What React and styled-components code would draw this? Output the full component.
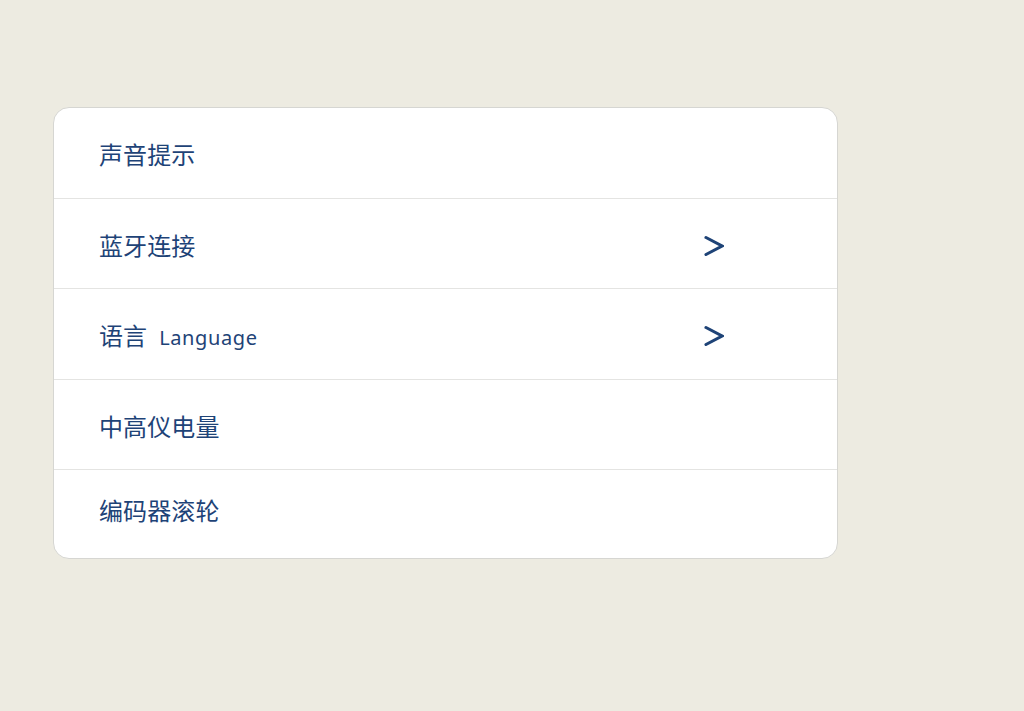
import React from "react";
import styled, { createGlobalStyle } from "styled-components";

const GlobalStyle = createGlobalStyle`
  html, body {
    margin: 0;
    padding: 0;
    background: #edebe1;
  }
  body {
    font-family: "Noto Sans CJK SC", "Noto Sans", sans-serif;
  }
`;

const Page = styled.div`
  min-height: 711px;
  padding: 107px 0 0 53px;
  box-sizing: border-box;
`;

const Card = styled.div`
  width: 785px;
  box-sizing: border-box;
  background: #ffffff;
  border: 1px solid #d6d6d2;
  border-radius: 16px;
  overflow: hidden;
`;

const Row = styled.div`
  display: flex;
  align-items: center;
  justify-content: space-between;
  height: ${(p) => (p.last ? "88px" : "90.5px")};
  padding: ${(p) => (p.last ? "0 0 10px 45px" : "2px 0 0 45px")};
  box-sizing: border-box;
  border-bottom: ${(p) => (p.last ? "none" : "1px solid #e4e4e2")};
`;

const Label = styled.span`
  font-size: 24px;
  color: #1e4377;
  letter-spacing: 0.1px;
`;

const Latin = styled.span`
  margin-left: 12px;
  font-family: "Noto Sans", sans-serif;
  font-size: 20px;
  letter-spacing: 0.6px;
`;

const Chevron = styled.span`
  width: 20px;
  margin: 3px 113px 0 0;
  display: flex;
  align-items: center;
  color: #1e4377;
`;

function Arrow() {
  return (
    <Chevron>
      <svg width="20" height="22" viewBox="0 0 20 22">
        <path
          d="M2 2.5 L18 11 L2 19.5"
          fill="none"
          stroke="currentColor"
          strokeWidth="3.1"
          strokeLinecap="round"
          strokeLinejoin="miter"
        />
      </svg>
    </Chevron>
  );
}

const items = [
  { text: "声音提示" },
  { text: "蓝牙连接", arrow: true },
  { text: "语言", latin: "Language", arrow: true },
  { text: "中高仪电量" },
  { text: "编码器滚轮" },
];

export default function App() {
  return (
    <Page>
      <GlobalStyle />
      <Card>
        {items.map((item, i) => (
          <Row key={item.text} last={i === items.length - 1}>
            <Label>
              {item.text}
              {item.latin && <Latin>{item.latin}</Latin>}
            </Label>
            {item.arrow && <Arrow />}
          </Row>
        ))}
      </Card>
    </Page>
  );
}
